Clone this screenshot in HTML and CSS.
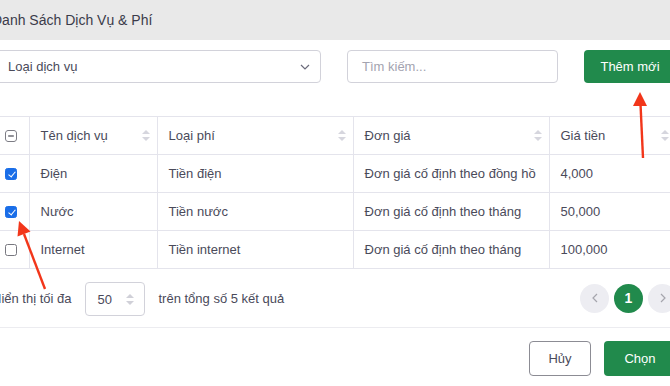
FILE: index.html
```html
<!DOCTYPE html>
<html lang="vi">
<head>
    <meta charset="UTF-8">
    <meta name="viewport" content="width=device-width, initial-scale=1.0">
    <title>Danh Sách Dịch Vụ & Phí</title>
    <link rel="stylesheet" href="styles.css">
</head>
<body>
    <div class="modal">
        <header class="modal-header">
            <h1>Danh Sách Dịch Vụ &amp; Phí</h1>
        </header>

        <div class="modal-body">
            <div class="toolbar">
                <div class="select-box">
                    <span>Loại dịch vụ</span>
                    <svg width="10" height="6" viewBox="0 0 10 6"><polyline points="1,1 5,5 9,1" fill="none" stroke="#6b6b7b" stroke-width="1.2"/></svg>
                </div>
                <div class="search-box">Tìm kiếm...</div>
                <button class="btn btn-green btn-add">Thêm mới</button>
            </div>

            <table class="service-table">
                <colgroup>
                    <col style="width:33px">
                    <col style="width:128px">
                    <col style="width:196px">
                    <col style="width:196px">
                    <col style="width:127px">
                </colgroup>
                <thead>
                    <tr>
                        <th class="cb-cell">
                            <svg class="cb" width="12" height="12" viewBox="0 0 12 12"><rect x="0.5" y="0.5" width="11" height="11" rx="2.5" fill="#fff" stroke="#7c7c84"/><line x1="3.2" y1="6" x2="8.8" y2="6" stroke="#6c6c74" stroke-width="1.3"/></svg>
                        </th>
                        <th><div class="th-inner">Tên dịch vụ <span class="sort"></span></div></th>
                        <th><div class="th-inner">Loại phí <span class="sort"></span></div></th>
                        <th><div class="th-inner">Đơn giá <span class="sort"></span></div></th>
                        <th><div class="th-inner">Giá tiền <span class="sort"></span></div></th>
                    </tr>
                </thead>
                <tbody>
                    <tr>
                        <td class="cb-cell"><span class="cb checked"></span></td>
                        <td>Điện</td>
                        <td>Tiền điện</td>
                        <td>Đơn giá cố định theo đồng hồ</td>
                        <td>4,000</td>
                    </tr>
                    <tr>
                        <td class="cb-cell"><span class="cb checked"></span></td>
                        <td>Nước</td>
                        <td>Tiền nước</td>
                        <td>Đơn giá cố định theo tháng</td>
                        <td>50,000</td>
                    </tr>
                    <tr>
                        <td class="cb-cell"><span class="cb"></span></td>
                        <td>Internet</td>
                        <td>Tiền internet</td>
                        <td>Đơn giá cố định theo tháng</td>
                        <td>100,000</td>
                    </tr>
                </tbody>
            </table>

            <div class="table-footer">
                <span>Hiển thị tối đa</span>
                <div class="page-size">
                    <span>50</span>
                    <span class="sort light"></span>
                </div>
                <span>trên tổng số 5 kết quả</span>
                <div class="pager">
                    <span class="page-btn">
                        <svg width="6" height="10" viewBox="0 0 6 10"><polyline points="5,1 1,5 5,9" fill="none" stroke="#a5a5ad" stroke-width="1.2"/></svg>
                    </span>
                    <span class="page-btn active">1</span>
                    <span class="page-btn">
                        <svg width="6" height="10" viewBox="0 0 6 10"><polyline points="1,1 5,5 1,9" fill="none" stroke="#a5a5ad" stroke-width="1.2"/></svg>
                    </span>
                </div>
            </div>

            <div class="actions">
                <button class="btn btn-outline">Hủy</button>
                <button class="btn btn-green btn-choose">Chọn</button>
            </div>
        </div>
    </div>

    <!-- mũi tên chú thích -->
    <svg class="arrows" width="670" height="386" viewBox="0 0 670 386">
        <line x1="643" y1="158" x2="640.5" y2="104" stroke="#f2361a" stroke-width="2.4"/>
        <polygon points="640,92 633,106 647,106" fill="#f2361a"/>
        <line x1="45" y1="289" x2="24" y2="234" stroke="#f2361a" stroke-width="2.4"/>
        <polygon points="19,221 30.5,231.5 17.5,236.5" fill="#f2361a"/>
    </svg>
</body>
</html>
```

FILE: styles.css
```css
:root {
    --text: #4a4a5a;
    --title: #3b3b4a;
    --line: #e4e4ec;
    --input-border: #d2d2da;
    --green: #218a4c;
    --header-bg: #e9e9e9;
}
body {
    margin: 0;
    font-family: 'Liberation Sans', Arial, sans-serif;
    font-size: 13px;
    color: var(--text);
    background: #fff;
    overflow: hidden;
    width: 670px;
    height: 386px;
    position: relative;
}
.modal {
    margin-left: -20px;
    width: 712px;
}
.modal-header {
    background: var(--header-bg);
    height: 40px;
    display: flex;
    align-items: center;
    padding: 0 12px;
}
.modal-header h1 {
    margin: 0;
    font-size: 14px;
    font-weight: normal;
    color: var(--title);
}
.modal-body {
    padding: 10px 16px 0;
}
.toolbar {
    display: flex;
    gap: 26px;
    height: 33px;
}
.select-box, .search-box {
    box-sizing: border-box;
    height: 33px;
    border: 1px solid var(--input-border);
    border-radius: 4px;
    display: flex;
    align-items: center;
}
.select-box {
    width: 325px;
    padding: 0 10px 0 11px;
    justify-content: space-between;
    color: #4a4a5a;
}
.search-box {
    width: 211px;
    padding: 0 14px;
    color: #a3a3b0;
}
.btn {
    font-family: inherit;
    font-size: 13px;
    border-radius: 4px;
    cursor: pointer;
    box-sizing: border-box;
}
.btn-green {
    background: var(--green);
    color: #fff;
    border: none;
    font-weight: normal;
}
.btn-add {
    width: 92px;
    height: 33px;
}
.service-table {
    margin-top: 33px;
    width: 680px;
    border-collapse: collapse;
    table-layout: fixed;
}
.service-table th,
.service-table td {
    height: 37px;
    padding: 0 10px 0 11px;
    text-align: left;
    font-weight: normal;
    border-top: 1px solid var(--line);
    border-bottom: 1px solid var(--line);
    border-left: 1px solid var(--line);
    white-space: nowrap;
    overflow: hidden;
    color: var(--text);
}
.service-table th:first-child,
.service-table td:first-child {
    border-left: none;
}
.service-table .cb-cell {
    padding: 0 0 0 9px;
}
.th-inner {
    display: flex;
    justify-content: space-between;
    align-items: center;
}
.sort {
    display: inline-block;
    width: 8px;
    height: 11px;
    position: relative;
    margin-right: -3px;
}
.sort::before, .sort::after {
    content: '';
    position: absolute;
    left: 0;
    border-left: 4px solid transparent;
    border-right: 4px solid transparent;
}
.sort::before {
    top: 0;
    border-bottom: 4px solid #d6d6de;
}
.sort::after {
    bottom: 0;
    border-top: 4px solid #d6d6de;
}
.cb {
    display: block;
    width: 12px;
    height: 12px;
    box-sizing: border-box;
    border: 1px solid #77777f;
    border-radius: 2.5px;
    position: relative;
}
svg.cb {
    border: none;
}
.cb.checked {
    background: #1a6ee8;
    border-color: #1a6ee8;
}
.cb.checked::after {
    content: '';
    position: absolute;
    left: 3.5px;
    top: 1px;
    width: 3px;
    height: 6px;
    border-right: 1.8px solid #fff;
    border-bottom: 1.8px solid #fff;
    transform: rotate(40deg);
}
.table-footer {
    display: flex;
    align-items: center;
    height: 58px;
    margin-left: -4px;
    border-bottom: 1px solid #ececf0;
}
.page-size {
    box-sizing: border-box;
    width: 60px;
    height: 34px;
    margin: 0 14px 0 13px;
    border: 1px solid var(--input-border);
    border-radius: 4px;
    display: flex;
    align-items: center;
    justify-content: space-between;
    padding: 0 13px 0 12px;
    position: relative;
    top: 1px;
}
.sort.light::before { border-bottom-color: #d0d0d8; }
.sort.light::after { border-top-color: #d0d0d8; }
.pager {
    margin-left: auto;
    margin-right: -1px;
    display: flex;
    gap: 5px;
}
.page-btn {
    width: 29px;
    height: 29px;
    border-radius: 50%;
    background: #ededf2;
    display: flex;
    align-items: center;
    justify-content: center;
}
.page-btn.active {
    background: var(--green);
    color: #fff;
    font-weight: bold;
    font-size: 14px;
}
.actions {
    display: flex;
    justify-content: flex-end;
    gap: 13px;
    padding-top: 13px;
}
.btn-outline {
    width: 62px;
    height: 35px;
    background: #fff;
    border: 1px solid #8c8c94;
    color: var(--text);
}
.btn-choose {
    width: 72px;
    height: 35px;
}
.arrows {
    position: absolute;
    left: 0;
    top: 0;
    pointer-events: none;
}
```
